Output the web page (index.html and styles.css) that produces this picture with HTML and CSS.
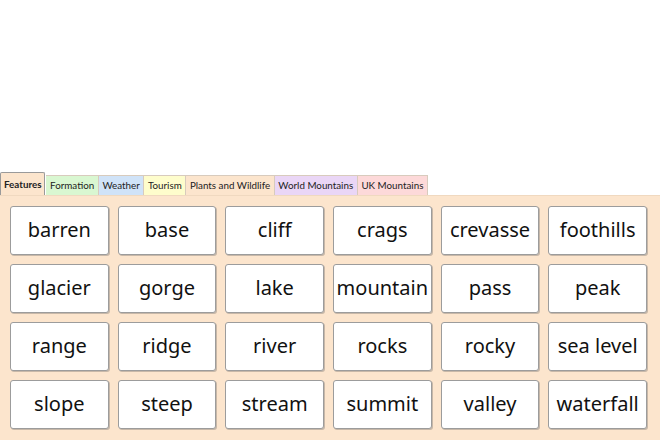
FILE: index.html
```html
<!DOCTYPE html>
<html lang="en">
<head>
  <meta charset="UTF-8">
  <title>Mountains word mat</title>
  <link rel="stylesheet" href="styles.css">
</head>
<body>
  <div class="page">
    <nav class="tabs">
      <div class="tab active">Features</div>
      <div class="tab formation">Formation</div>
      <div class="tab weather">Weather</div>
      <div class="tab tourism">Tourism</div>
      <div class="tab plants">Plants and Wildlife</div>
      <div class="tab world">World Mountains</div>
      <div class="tab uk">UK Mountains</div>
    </nav>

    <div class="panel">
      <div class="words">
        <div class="word">barren</div>
        <div class="word">base</div>
        <div class="word">cliff</div>
        <div class="word">crags</div>
        <div class="word">crevasse</div>
        <div class="word">foothills</div>
        <div class="word">glacier</div>
        <div class="word">gorge</div>
        <div class="word">lake</div>
        <div class="word">mountain</div>
        <div class="word">pass</div>
        <div class="word">peak</div>
        <div class="word">range</div>
        <div class="word">ridge</div>
        <div class="word">river</div>
        <div class="word">rocks</div>
        <div class="word">rocky</div>
        <div class="word">sea level</div>
        <div class="word">slope</div>
        <div class="word">steep</div>
        <div class="word">stream</div>
        <div class="word">summit</div>
        <div class="word">valley</div>
        <div class="word">waterfall</div>
      </div>
    </div>
  </div>
</body>
</html>
```

FILE: styles.css
```css
* {
  margin: 0;
  padding: 0;
  box-sizing: border-box;
}

body {
  font-family: 'Lato', 'Open Sans', sans-serif;
  background: #fff;
  color: #111;
  overflow: hidden;
}

.page {
  height: 440px;
  display: flex;
  flex-direction: column;
  justify-content: flex-end;
}

.tabs {
  display: flex;
  align-items: flex-end;
  height: 23px;
}

.tab {
  height: 20px;
  padding: 0 3.6px;
  font-size: 9.8px;
  line-height: 19px;
  color: #222;
  border: 1px solid #d8cbbd;
  border-bottom: none;
  border-left: none;
  white-space: nowrap;
}

.tab.active {
  height: 23px;
  line-height: 23px;
  font-weight: bold;
  background: #fce5cd;
  border: 1px solid #9a9a9a;
  border-bottom: none;
  border-radius: 2px 2px 0 0;
  margin-right: 1px;
  padding: 0 3px;
}

.formation { background: #d9f7d1; }
.weather   { background: #d0e3f8; }
.tourism   { background: #fefdcc; }
.plants    { background: #fce5cd; }
.world     { background: #ead6f6; }
.uk        { background: #fdd9d9; }

.panel {
  height: 245px;
  background: #fce5cd;
  border-top: 1px solid #f0d9c0;
  padding: 10px 13px 0 10px;
}

.words {
  display: grid;
  grid-template-columns: repeat(6, 1fr);
  grid-auto-rows: 49px;
  gap: 9px;
}

.word {
  background: #fff;
  border: 1px solid #9c9c9c;
  border-radius: 3px;
  box-shadow: 1px 1px 0 #c8b8a8;
  display: flex;
  align-items: center;
  justify-content: center;
  font-family: 'Noto Sans', 'Open Sans', sans-serif;
  font-size: 20px;
  color: #111;
  padding-bottom: 2px;
}
```
